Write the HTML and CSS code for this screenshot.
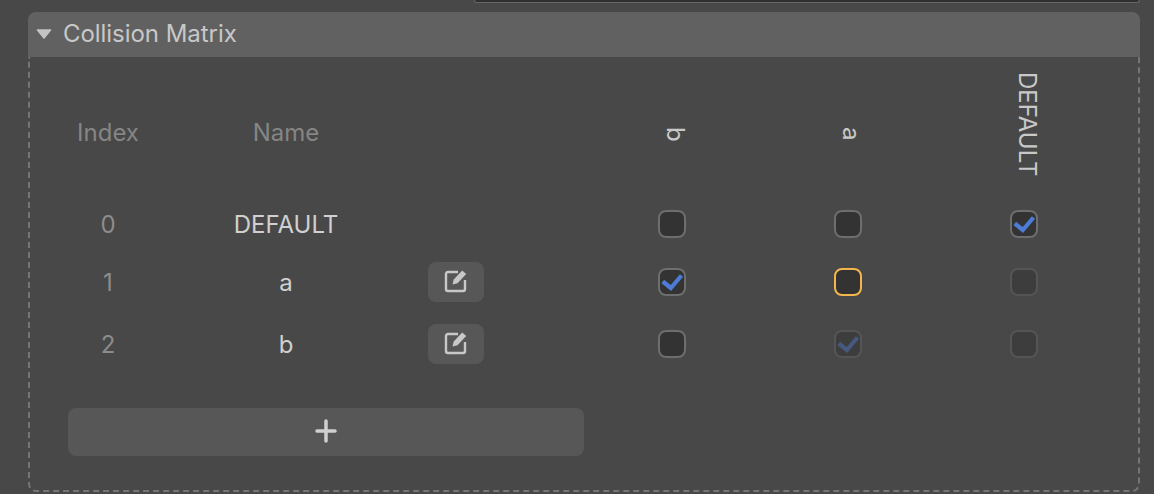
FILE: index.html
```html
<!DOCTYPE html>
<html lang="en">
<head>
    <meta charset="UTF-8">
    <meta name="viewport" content="width=device-width, initial-scale=1.0">
    <title>Collision Matrix</title>
    <link rel="stylesheet" href="styles.css">
</head>
<body>

    <!-- Bottom edge of the field above the panel -->
    <div class="top-field"></div>

    <div class="panel">
        <div class="panel-header">
            <svg class="caret" width="16" height="10" viewBox="0 0 16 10"><path d="M1.5 1h13L8 9z" fill="#c4c4c4" stroke="#c4c4c4" stroke-width="1.5" stroke-linejoin="round"/></svg>
            <span class="panel-title">Collision Matrix</span>
        </div>

        <div class="panel-body">
            <div class="matrix">
                <!-- Header row -->
                <div class="head-cell">Index</div>
                <div class="head-cell">Name</div>
                <div></div>
                <div></div>
                <div class="vert-cell">b</div>
                <div class="vert-cell">a</div>
                <div class="vert-cell vert-long">DEFAULT</div>

                <!-- Row 0 -->
                <div class="index-cell">0</div>
                <div class="name-cell">DEFAULT</div>
                <div></div>
                <div></div>
                <div class="check-cell"><span class="check"></span></div>
                <div class="check-cell"><span class="check"></span></div>
                <div class="check-cell">
                    <span class="check"><svg width="24" height="24" viewBox="0 0 24 24"><path d="M2.800 11.500l8 6.500L21.500 5.500" fill="none" stroke="#4d7cd6" stroke-width="4.200"/></svg></span>
                </div>

                <!-- Row 1 -->
                <div class="index-cell">1</div>
                <div class="name-cell">a</div>
                <div class="edit-cell">
                    <button class="edit-btn">
                        <svg class="edit-icon" width="24" height="24" viewBox="0 0 24 24"><path d="M14 2H4a2 2 0 0 0-2 2v15a2 2 0 0 0 2 2h15a2 2 0 0 0 2-2V10" fill="none" stroke="#c8c8c8" stroke-width="2.400"/><path d="M8.500 14.500l1.200-5L18.200.5l4 3.500-8.700 9.300z" fill="#c8c8c8"/></svg>
                    </button>
                </div>
                <div></div>
                <div class="check-cell">
                    <span class="check"><svg width="24" height="24" viewBox="0 0 24 24"><path d="M2.800 11.500l8 6.500L21.500 5.500" fill="none" stroke="#4d7cd6" stroke-width="4.200"/></svg></span>
                </div>
                <div class="check-cell"><span class="check check-focus"></span></div>
                <div class="check-cell"><span class="check check-off"></span></div>

                <!-- Row 2 -->
                <div class="index-cell">2</div>
                <div class="name-cell">b</div>
                <div class="edit-cell">
                    <button class="edit-btn">
                        <svg class="edit-icon" width="24" height="24" viewBox="0 0 24 24"><path d="M14 2H4a2 2 0 0 0-2 2v15a2 2 0 0 0 2 2h15a2 2 0 0 0 2-2V10" fill="none" stroke="#c8c8c8" stroke-width="2.400"/><path d="M8.500 14.500l1.200-5L18.200.5l4 3.500-8.700 9.300z" fill="#c8c8c8"/></svg>
                    </button>
                </div>
                <div></div>
                <div class="check-cell"><span class="check"></span></div>
                <div class="check-cell">
                    <span class="check check-off"><svg width="24" height="24" viewBox="0 0 24 24"><path d="M2.800 11.500l8 6.500L21.500 5.500" fill="none" stroke="#46597f" stroke-width="4.200"/></svg></span>
                </div>
                <div class="check-cell"><span class="check check-off"></span></div>
            </div>

            <button class="add-btn">
                <svg width="24" height="24" viewBox="0 0 24 24"><path d="M3 12h18M12 2v20" fill="none" stroke="#d0d0d0" stroke-width="3.500" stroke-linecap="round"/></svg>
            </button>
        </div>
    </div>

</body>
</html>
```

FILE: styles.css
```css
body {
    margin: 0;
    height: 494px;
    overflow: hidden;
    background-color: #484848;
    font-family: 'Inter', sans-serif;
    font-size: 24px;
    color: #c8c8c8;
}

.top-field {
    height: 2px;
    margin: 0 14px 9px 474px;
    background-color: #2f2f2f;
    border: 1px solid #666;
    border-top: none;
    border-radius: 0 0 6px 6px;
}

.panel {
    margin: 0 14px 0 28px;
}

.panel-header {
    display: flex;
    align-items: center;
    gap: 11px;
    height: 45px;
    box-sizing: border-box;
    padding: 0 0 2px 8px;
    background-color: #616161;
    border-radius: 8px 8px 0 0;
}

.panel-title {
    color: #c8c8c8;
    letter-spacing: -0.05px;
}

.panel-body {
    height: 435px;
    box-sizing: border-box;
    padding: 15px 38px 0;
    border: 2px dashed #757575;
    border-top: none;
    border-radius: 0 0 8px 8px;
}

.matrix {
    display: grid;
    grid-template-columns: 80px 276px 64px 96px repeat(3, 176px);
    grid-template-rows: 114px 32px 40px 40px;
    row-gap: 22px;
    justify-items: center;
    align-items: center;
}

.head-cell {
    padding-top: 6px;
    color: #858585;
}

.vert-cell {
    writing-mode: vertical-rl;
    padding: 10px 0 0 6px;
    line-height: 24px;
    color: #c8c8c8;
}

.vert-long {
    align-self: start;
    padding-top: 0;
}

.index-cell {
    color: #8c8c8c;
}

.name-cell {
    color: #d0d0d0;
}

.edit-cell {
    display: flex;
}

.edit-btn {
    display: flex;
    justify-content: center;
    width: 56px;
    height: 40px;
    padding: 8px 0 0;
    box-sizing: border-box;
    border: none;
    border-radius: 8px;
    background-color: #575757;
}

.edit-icon {
    overflow: visible;
}

.check-cell {
    display: flex;
}

.check {
    display: flex;
    align-items: center;
    justify-content: center;
    width: 28px;
    height: 28px;
    box-sizing: border-box;
    border: 2px solid #6e6e6e;
    border-radius: 8px;
    background-color: #333;
}

.check-focus {
    border-color: #f2b64c;
}

.check-off {
    border-color: #555;
    background-color: #3d3d3d;
}

.add-btn {
    display: flex;
    align-items: center;
    justify-content: center;
    width: 516px;
    height: 48px;
    margin-top: 44px;
    padding: 0 0 2px;
    border: none;
    border-radius: 8px;
    background-color: #575757;
}
```
